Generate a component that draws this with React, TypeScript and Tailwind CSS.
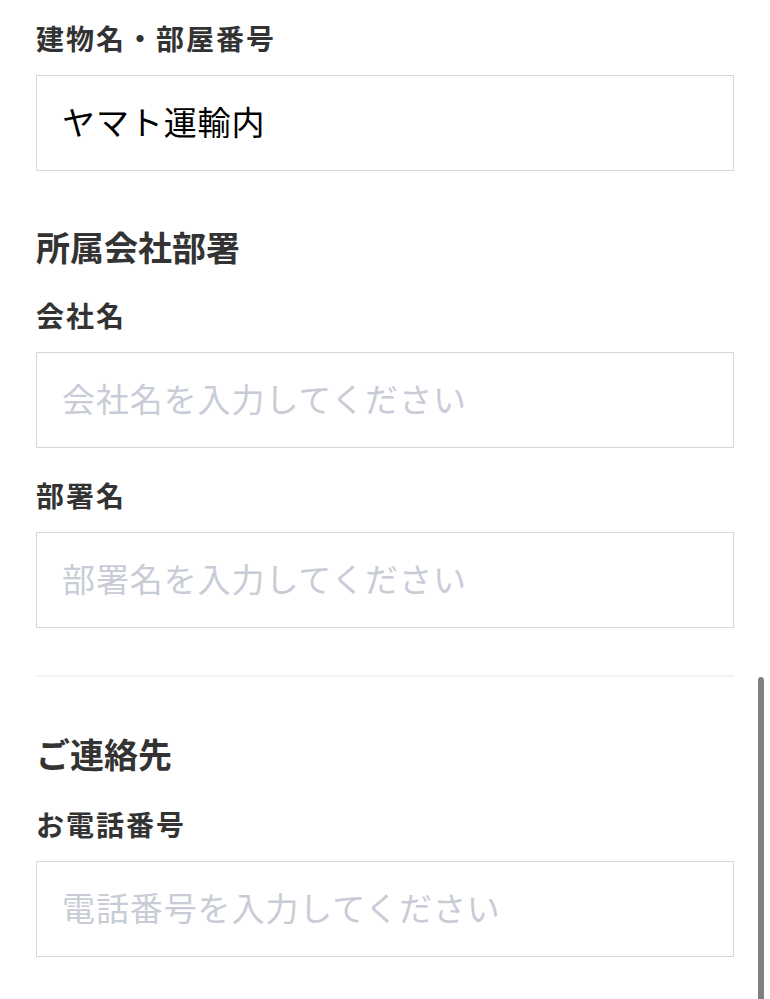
import React from "react";

const font = { fontFamily: '"Noto Sans CJK JP", "Noto Sans", sans-serif' };

function Label({ children, className = "" }: { children: React.ReactNode; className?: string }) {
  return (
    <div className={`h-[40px] leading-[40px] text-[28px] font-bold tracking-[2px] text-[#333333] ${className}`}>
      {children}
    </div>
  );
}

function Field({ placeholder, value, className = "" }: { placeholder?: string; value?: string; className?: string }) {
  return (
    <input
      type="text"
      defaultValue={value}
      placeholder={placeholder}
      className={`block w-full h-[96px] border-[1.5px] border-[#d4d7df] bg-white pl-[25px] pr-4 pb-[4px] text-[33px] tracking-[0.9px] text-black placeholder:text-[#c8ccd6] outline-none ${className}`}
      style={font}
    />
  );
}

export default function App() {
  return (
    <div className="relative w-[770px] h-[999px] overflow-hidden bg-white" style={font}>
      <div className="px-[36px] pt-[18px]">
        <Label>建物名・部屋番号</Label>
        <Field className="mt-[17px]" value="ヤマト運輸内" />

        <div className="mt-[54px] h-[44px] leading-[44px] text-[34px] font-bold text-[#333333]">所属会社部署</div>

        <Label className="mt-[26px]">会社名</Label>
        <Field className="mt-[17px]" placeholder="会社名を入力してください" />

        <Label className="mt-[27px]">部署名</Label>
        <Field className="mt-[17px]" placeholder="部署名を入力してください" />

        <div className="mt-[47px] h-[2px] bg-[#f3f3f7]" />

        <div className="mt-[55px] h-[44px] leading-[44px] text-[34px] font-bold text-[#333333]">ご連絡先</div>

        <Label className="mt-[28px]">お電話番号</Label>
        <Field className="mt-[17px]" placeholder="電話番号を入力してください" />
      </div>

      <div className="absolute left-[758px] top-[677px] w-[6px] h-[340px] rounded-full bg-[#808080]" />
    </div>
  );
}
